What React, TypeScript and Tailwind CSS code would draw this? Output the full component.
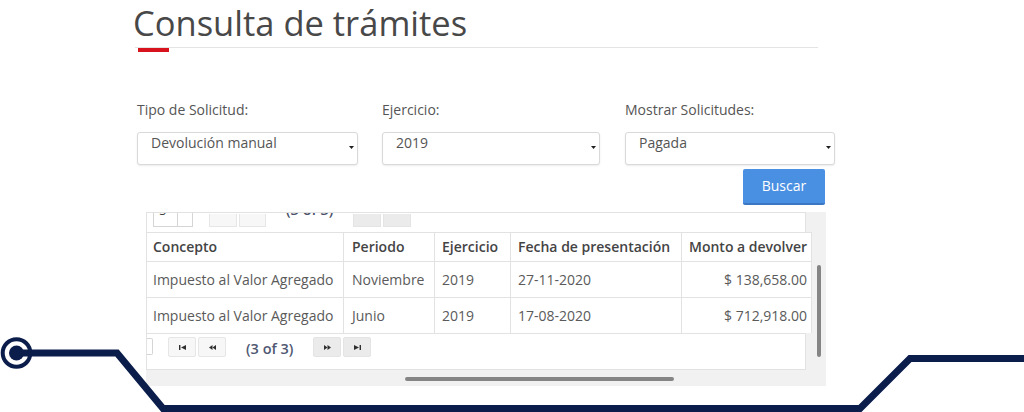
import React from "react";

// ─── tiny pager glyphs ─────────────────────────────────────────
type Dir = "first" | "prev" | "next" | "last";

const PagerIcon = ({ dir }: { dir: Dir }) => {
  const shapes: Record<Dir, React.ReactNode> = {
    first: (
      <>
        <rect x="0" y="0" width="1.4" height="5" />
        <path d="M7 0 L2 2.5 L7 5 Z" />
      </>
    ),
    prev: (
      <>
        <path d="M3.5 0 L0 2.5 L3.5 5 Z" />
        <path d="M7 0 L3.5 2.5 L7 5 Z" />
      </>
    ),
    next: (
      <>
        <path d="M0 0 L3.5 2.5 L0 5 Z" />
        <path d="M3.5 0 L7 2.5 L3.5 5 Z" />
      </>
    ),
    last: (
      <>
        <path d="M0 0 L5 2.5 L0 5 Z" />
        <rect x="5.6" y="0" width="1.4" height="5" />
      </>
    ),
  };
  return (
    <svg width="7" height="5" viewBox="0 0 7 5" fill="#2f2f2f">
      {shapes[dir]}
    </svg>
  );
};

const PagerButton = ({ dir, disabled }: { dir: Dir; disabled?: boolean }) => (
  <div
    className={`w-[28px] h-[20px] flex items-center justify-center rounded-[2px] border ${
      disabled ? "bg-[#ebebeb] border-[#e4e4e4]" : "bg-[#f7f7f7] border-[#e6e6e6]"
    }`}
  >
    <PagerIcon dir={dir} />
  </div>
);

const Caret = () => (
  <svg width="5" height="3" viewBox="0 0 5 3" className="mt-[13px] mr-[3px] shrink-0">
    <path d="M0 0 H5 L2.5 3 Z" fill="#1f1f1f" />
  </svg>
);

// ─── filter column ─────────────────────────────────────────────
const Filter = ({ label, value, width }: { label: string; value: string; width: string }) => (
  <div className={width}>
    <div className="text-[14px] leading-[20px] text-[#555]">{label}</div>
    <div className="mt-[12px] h-[33px] flex justify-between items-start bg-white border border-[#d9d9d9] rounded-[3px] shadow-[0_1px_2px_rgba(0,0,0,0.08)] pl-[13px]">
      <span className="text-[14px] leading-[20px] text-[#555]">{value}</span>
      <Caret />
    </div>
  </div>
);

// ─── table data ────────────────────────────────────────────────
const columns = [
  { label: "Concepto", w: "w-[197px]", pl: "pl-[6px]" },
  { label: "Periodo", w: "w-[91px]", pl: "pl-[8px]" },
  { label: "Ejercicio", w: "w-[76px]", pl: "pl-[7px]" },
  { label: "Fecha de presentación", w: "w-[171px]", pl: "pl-[7px]" },
  { label: "Monto a devolver", w: "w-[130px]", pl: "pl-[7px]" },
];

const rows = [
  ["Impuesto al Valor Agregado", "Noviembre", "2019", "27-11-2020", "$ 138,658.00"],
  ["Impuesto al Valor Agregado", "Junio", "2019", "17-08-2020", "$ 712,918.00"],
];

export default function App() {
  return (
    <div className="relative w-[1024px] h-[412px] overflow-hidden bg-white font-['Open_Sans',sans-serif]">
      <div className="ml-[137px] w-[698px]">
        {/* ─── Title ─── */}
        <h1 className="-ml-[4px] pt-[6px] text-[34.5px] leading-[34px] font-normal text-[#484848]">
          Consulta de trámites
        </h1>
        <div className="mt-[7px] -ml-[2px] w-[683px] h-px bg-[#e3e3e3]" />
        <div className="ml-[1px] w-[31px] h-[4px] bg-[#d8131d]" />

        {/* ─── Filters ─── */}
        <div className="mt-[48px] flex">
          <Filter label="Tipo de Solicitud:" value="Devolución manual" width="w-[221px]" />
          <div className="ml-[24px]">
            <Filter label="Ejercicio:" value="2019" width="w-[218px]" />
          </div>
          <div className="ml-[25px]">
            <Filter label="Mostrar Solicitudes:" value="Pagada" width="w-[210px]" />
          </div>
        </div>

        <div className="mt-[4px] flex justify-end pr-[10px]">
          <button className="w-[82px] h-[36px] rounded-[2px] bg-[#4a90e2] border-b-2 border-[#3a77c2] text-white text-[14px] leading-[20px]">
            Buscar
          </button>
        </div>

        {/* ─── Results (scrolled panel) ─── */}
        <div className="mt-[7px] ml-[9px] w-[680px] h-[174px] bg-[#f1f1f1] overflow-hidden flex flex-col">
          <div className="flex h-[158px]">
            <div className="w-[666px]">
              {/* top paginator, mostly scrolled out of view */}
              <div className="w-[660px] h-[20px] bg-white border-t border-l border-r border-[#e2e2e2] overflow-hidden flex items-end pb-[5px]">
                <div className="ml-[6px] w-[24px] h-[14px] border-l border-b border-[#d5d5d5] pl-[5px]">
                  <div className="-mt-[13px] text-[13px] leading-[20px] text-[#444]">5</div>
                </div>
                <div className="w-[16px] h-[14px] border-l border-r border-b border-[#d5d5d5]" />
                <div className="ml-[16px] w-[28px] h-[13px] bg-[#f7f7f7] border-l border-r border-b border-[#e6e6e6]" />
                <div className="ml-[2px] w-[27px] h-[13px] bg-[#f7f7f7] border-l border-r border-b border-[#e6e6e6]" />
                <div className="ml-[20px] w-[47px] h-[14px]">
                  <div className="-mt-[13px] text-[14.5px] leading-[20px] font-semibold text-[#4a5068] whitespace-nowrap">
                    (3 of 3)
                  </div>
                </div>
                <div className="ml-[20px] w-[28px] h-[13px] bg-[#ebebeb] border-l border-r border-b border-[#e4e4e4]" />
                <div className="ml-[2px] w-[28px] h-[13px] bg-[#ebebeb] border-l border-r border-b border-[#e4e4e4]" />
              </div>

              {/* header */}
              <div className="flex h-[29px] bg-white border-t border-l border-[#e2e2e2]">
                {columns.map((c) => (
                  <div
                    key={c.label}
                    className={`${c.w} ${c.pl} flex items-center border-r border-[#e2e2e2] text-[14px] leading-[20px] font-semibold text-[#444] whitespace-nowrap overflow-hidden`}
                  >
                    {c.label}
                  </div>
                ))}
              </div>

              {/* body */}
              {rows.map((r, i) => (
                <div key={i} className="flex h-[36px] bg-white border-t border-l border-[#e2e2e2]">
                  {r.map((v, j) => (
                    <div
                      key={j}
                      className={`${columns[j].w} ${
                        j === 4 ? "justify-end pr-[4px]" : columns[j].pl
                      } flex items-center border-r border-[#e2e2e2] text-[14px] leading-[20px] text-[#5a5a5a] whitespace-nowrap`}
                    >
                      {v}
                    </div>
                  ))}
                </div>
              ))}

              {/* bottom paginator */}
              <div className="w-[660px] h-[37px] bg-white border border-[#e2e2e2] flex items-start pt-[3px]">
                <div className="mt-[1px] w-[6px] h-[17px] bg-white border-t border-r border-b border-[#d5d5d5] rounded-r-[2px]" />
                <div className="ml-[15px]">
                  <PagerButton dir="first" />
                </div>
                <div className="ml-[2px]">
                  <PagerButton dir="prev" />
                </div>
                <div className="ml-[20px] w-[47px] mt-[2px] text-[14.5px] leading-[20px] font-semibold text-[#4f5872] whitespace-nowrap">
                  (3 of 3)
                </div>
                <div className="ml-[20px]">
                  <PagerButton dir="next" disabled />
                </div>
                <div className="ml-[2px]">
                  <PagerButton dir="last" disabled />
                </div>
              </div>
            </div>

            {/* vertical scrollbar */}
            <div className="w-[14px] pt-[53px] pl-[5px]">
              <div className="w-[4px] h-[92px] rounded-full bg-[#858585]" />
            </div>
          </div>

          {/* horizontal scrollbar */}
          <div className="h-[16px] pl-[259px] pt-[7px]">
            <div className="w-[269px] h-[4px] rounded-full bg-[#858585]" />
          </div>
        </div>
      </div>

      {/* ─── decorative circuit line ─── */}
      <svg
        className="absolute inset-0 pointer-events-none"
        width="1024"
        height="412"
        viewBox="0 0 1024 412"
      >
        <path
          d="M16 353 H117 L163 408.5 H860 L910 358.5 H1030"
          fill="none"
          stroke="#0b1d4b"
          strokeWidth="7"
        />
        <circle cx="16.5" cy="353" r="13.8" fill="none" stroke="#0b1d4b" strokeWidth="4" />
        <circle cx="16.5" cy="353" r="7.5" fill="#0b1d4b" />
      </svg>
    </div>
  );
}
